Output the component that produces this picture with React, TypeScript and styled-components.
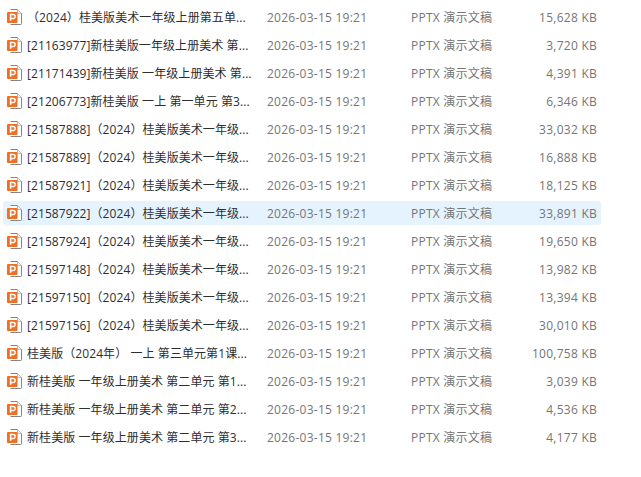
import React from "react";
import styled, { createGlobalStyle } from "styled-components";

const Global = createGlobalStyle`
  html, body { margin: 0; padding: 0; background: #fff; }
  body { font-family: "Open Sans", "Noto Sans CJK SC", sans-serif; font-size: 12px; }
`;

const List = styled.div`
  display: flex;
  flex-direction: column;
  gap: 4px;
  width: 598px;
  margin-left: 3px;
  padding-top: 5px;
`;

const Row = styled.div<{ $selected?: boolean }>`
  display: grid;
  grid-template-columns: 24px 240px 144px 1fr auto;
  align-items: center;
  height: 24px;
  padding-right: 4px;
  border-radius: 3px;
  background: ${(p) => (p.$selected ? "#e5f3ff" : "transparent")};
`;

const IconCell = styled.span`
  display: flex;
  padding-left: 4px;
`;

const Name = styled.span`
  color: #2e2e2e;
  letter-spacing: 0.08px;
  white-space: nowrap;
`;

const Muted = styled.span`
  color: #757575;
  letter-spacing: 0.25px;
  white-space: nowrap;
`;

const PptIcon = () => (
  <svg width="16" height="16" viewBox="0 0 16 16" aria-hidden="true">
    <path d="M3.5 0.5H10.5L14.5 4.5V14.7a.8.8 0 0 1-.8.8H3.5" fill="#fff" stroke="#858585" strokeWidth="1" />
    <path d="M10.5 0.5V4.5H14.5" fill="#f0f0f0" stroke="#b0b0b0" strokeWidth="0.8" />
    <rect x="0" y="3" width="10.5" height="11" rx="1" fill="#f26f21" />
    <path d="M3.6 11.8V5.6H6.2a1.9 1.9 0 0 1 0 3.9H3.6" fill="none" stroke="#fff" strokeWidth="1.5" />
  </svg>
);

const files = [
  ["（2024）桂美版美术一年级上册第五单...", "15,628 KB"],
  ["[21163977]新桂美版一年级上册美术 第...", "3,720 KB"],
  ["[21171439]新桂美版 一年级上册美术 第...", "4,391 KB"],
  ["[21206773]新桂美版 一上 第一单元 第3...", "6,346 KB"],
  ["[21587888]（2024）桂美版美术一年级...", "33,032 KB"],
  ["[21587889]（2024）桂美版美术一年级...", "16,888 KB"],
  ["[21587921]（2024）桂美版美术一年级...", "18,125 KB"],
  ["[21587922]（2024）桂美版美术一年级...", "33,891 KB"],
  ["[21587924]（2024）桂美版美术一年级...", "19,650 KB"],
  ["[21597148]（2024）桂美版美术一年级...", "13,982 KB"],
  ["[21597150]（2024）桂美版美术一年级...", "13,394 KB"],
  ["[21597156]（2024）桂美版美术一年级...", "30,010 KB"],
  ["桂美版（2024年） 一上 第三单元第1课...", "100,758 KB"],
  ["新桂美版 一年级上册美术 第二单元 第1...", "3,039 KB"],
  ["新桂美版 一年级上册美术 第二单元 第2...", "4,536 KB"],
  ["新桂美版 一年级上册美术 第二单元 第3...", "4,177 KB"],
];

export default function App() {
  return (
    <>
      <Global />
      <List>
        {files.map(([name, size], i) => (
          <Row key={name + i} $selected={i === 7}>
            <IconCell><PptIcon /></IconCell>
            <Name>{name}</Name>
            <Muted>2026-03-15 19:21</Muted>
            <Muted>PPTX 演示文稿</Muted>
            <Muted>{size}</Muted>
          </Row>
        ))}
      </List>
    </>
  );
}
